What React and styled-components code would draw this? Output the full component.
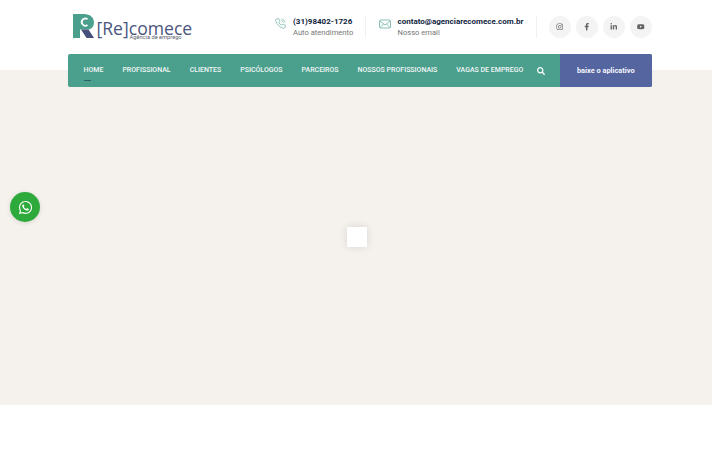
import React from 'react';
import styled, { createGlobalStyle } from 'styled-components';
import { FaFacebookF, FaInstagram, FaLinkedinIn, FaYoutube, FaSearch, FaWhatsapp } from 'react-icons/fa';

const GlobalStyle = createGlobalStyle`
  html, body {
    margin: 0;
    padding: 0;
    height: 100%;
    overflow: hidden;
    background: #fff;
    font-family: 'Roboto', sans-serif;
  }
`;

const Page = styled.div`
  position: relative;
  width: 712px;
  height: 450px;
`;

const Header = styled.header`
  height: 87px;
  padding: 0 60px 0 67.5px;
  background: linear-gradient(#fff 70px, #f5f2ed 70px);
`;

const TopBar = styled.div`
  height: 53.5px;
  display: flex;
  align-items: center;
`;

const Logo = styled.div`
  width: 202.5px;
  height: 26px;
  margin-left: 5px;
  display: flex;
  align-items: flex-start;
  flex-shrink: 0;
`;

const LogoText = styled.div`
  margin-left: 3px;
  position: relative;
  top: 2px;
  font-family: 'Open Sans', sans-serif;
  font-size: 17.6px;
  line-height: 25px;
  color: #4a5680;
  white-space: nowrap;
`;

const LogoSub = styled.div`
  margin-top: -6.5px;
  margin-left: 33px;
  font-family: 'Roboto', sans-serif;
  font-size: 5.7px;
  line-height: 7px;
  color: #5a6270;
`;

const Contact = styled.div`
  width: ${(p) => p.$width}px;
  height: 22px;
  display: flex;
  align-items: center;
  gap: 7px;
  flex-shrink: 0;
  border-right: 1px solid #f1f1f1;
  margin-right: ${(p) => p.$after}px;

  & > svg {
    margin-top: -6px;
  }
`;

const ContactText = styled.div`
  display: flex;
  flex-direction: column;
  white-space: nowrap;
`;

const ContactTitle = styled.div`
  font-size: 8px;
  line-height: 11px;
  font-weight: 700;
  color: #10243e;
`;

const ContactSub = styled.div`
  font-size: 7.6px;
  line-height: 11px;
  color: #777;
`;

const Socials = styled.div`
  display: flex;
  gap: 5px;
`;

const Social = styled.a`
  width: 22px;
  height: 22px;
  border-radius: 50%;
  background: #f4f4f4;
  color: #666;
  font-size: 7.5px;
  display: flex;
  align-items: center;
  justify-content: center;
`;

const Nav = styled.nav`
  height: 33.5px;
  display: flex;
  align-items: stretch;
  background: #4a9f8d;
  border-radius: 2px;
  overflow: hidden;
  box-shadow: 0 1px 2px rgba(0, 0, 0, 0.05);
`;

const NavLinks = styled.div`
  flex: 1;
  display: flex;
  align-items: center;
  padding-left: 16px;
  gap: 19px;
`;

const NavLink = styled.a`
  position: relative;
  font-size: 7px;
  font-weight: 500;
  color: #f2f7f6;
  white-space: nowrap;

  ${(p) =>
    p.$active &&
    `
    &::after {
      content: '';
      position: absolute;
      left: 0;
      bottom: -7px;
      width: 7px;
      height: 1px;
      background: #2b5f66;
    }
  `}
`;

const SearchIcon = styled.span`
  margin-left: -5px;
  margin-top: 2px;
  display: flex;
  color: #fff;
  font-size: 8px;
`;

const AppButton = styled.a`
  width: 92.5px;
  flex-shrink: 0;
  background: #5565a0;
  color: #f4f5fa;
  font-size: 7.4px;
  font-weight: 700;
  display: flex;
  align-items: center;
  justify-content: center;
`;

const Hero = styled.main`
  height: 318px;
  background: #f5f2ed;
  display: flex;
  align-items: center;
  justify-content: center;
`;

const Loader = styled.div`
  width: 20px;
  height: 20px;
  margin: 0 0 18px 1px;
  background: #fff;
  box-shadow: 0 0 8px rgba(0, 0, 0, 0.12);
`;

const WhatsApp = styled.a`
  position: absolute;
  left: 10px;
  top: 192px;
  width: 30px;
  height: 30px;
  border-radius: 50%;
  background: #2eaa3c;
  color: #fff;
  font-size: 15px;
  display: flex;
  align-items: center;
  justify-content: center;
  box-shadow: 0 1px 5px rgba(0, 0, 0, 0.12);
`;

const LogoMark = () => (
  <svg width="21" height="24" viewBox="0 0 21 24">
    <path d="M0 0H11C17 0 21 3.5 21 8.5C21 12 19 14.5 16 15.5L16 15.5H7V24H0Z" fill="#4a9f8d" />
    <path d="M8 15.5H15.5L21 24H13.5Z" fill="#47507c" />
    <path d="M14.5 5.2A3.6 3.6 0 1 0 14.5 11" fill="none" stroke="#fff" strokeWidth="1.8" />
  </svg>
);

const PhoneIcon = () => (
  <svg width="11" height="11" viewBox="0 0 24 24" fill="none" stroke="#4a9f8d" strokeWidth="1.3">
    <path d="M4 2l4-1 3 6-2.5 2.5c1 3 3 5 6 6L17 13l6 3-1 4c-.5 2-2 3-4 2.500C10 20 4 14 1.500 6 1 4 2 2.500 4 2z" />
    <path d="M14 6c2 .5 3.500 2 4 4M14 2c4 .5 7.500 4 8 8" />
  </svg>
);

const MailIcon = () => (
  <svg width="12" height="10" viewBox="0 0 24 20" fill="none" stroke="#4a9f8d" strokeWidth="1.3">
    <rect x="1" y="2" width="22" height="16" rx="2.500" />
    <path d="M2 4l10 8 10-8M2 17l7-7M22 17l-7-7" />
  </svg>
);

const links = ['PROFISSIONAL', 'CLIENTES', 'PSICÓLOGOS', 'PARCEIROS', 'NOSSOS PROFISSIONAIS', 'VAGAS DE EMPREGO'];

export default function App() {
  return (
    <Page>
      <GlobalStyle />
      <Header>
        <TopBar>
          <Logo>
            <LogoMark />
            <LogoText>
              [Re]comece
              <LogoSub>Agência de emprego</LogoSub>
            </LogoText>
          </Logo>
          <Contact $width={90} $after={12.5}>
            <PhoneIcon />
            <ContactText>
              <ContactTitle>(31)98402-1726</ContactTitle>
              <ContactSub>Auto atendimento</ContactSub>
            </ContactText>
          </Contact>
          <Contact $width={157} $after={12.5}>
            <MailIcon />
            <ContactText>
              <ContactTitle>contato@agenciarecomece.com.br</ContactTitle>
              <ContactSub>Nosso email</ContactSub>
            </ContactText>
          </Contact>
          <Socials>
            <Social><FaInstagram /></Social>
            <Social><FaFacebookF /></Social>
            <Social><FaLinkedinIn /></Social>
            <Social><FaYoutube /></Social>
          </Socials>
        </TopBar>
        <Nav>
          <NavLinks>
            <NavLink $active>HOME</NavLink>
            {links.map((l) => (
              <NavLink key={l}>{l}</NavLink>
            ))}
            <SearchIcon><FaSearch /></SearchIcon>
          </NavLinks>
          <AppButton>baixe o aplicativo</AppButton>
        </Nav>
      </Header>
      <Hero>
        <Loader />
      </Hero>
      <WhatsApp><FaWhatsapp /></WhatsApp>
    </Page>
  );
}
